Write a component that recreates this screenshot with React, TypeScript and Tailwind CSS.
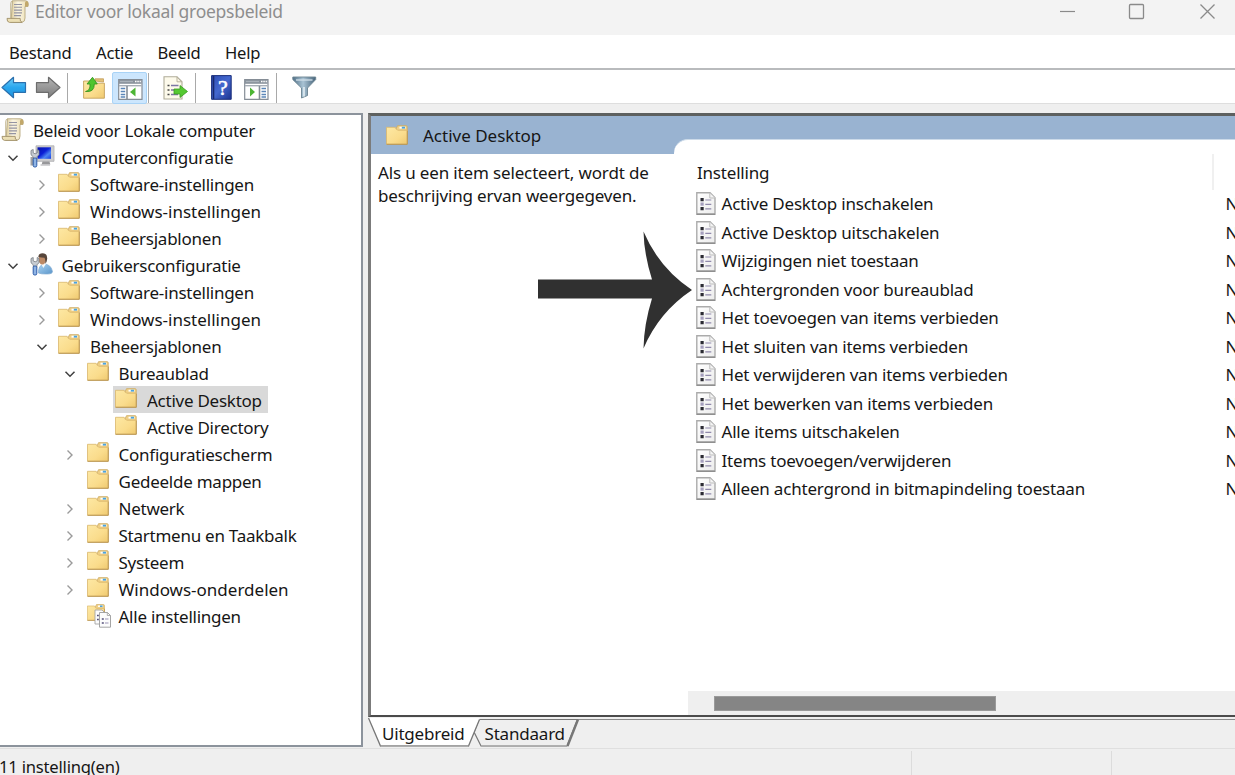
import type { ReactNode } from 'react'

interface TreeItem {
  label: string
  depth: number
  icon: 'scroll' | 'computer' | 'user' | 'folder' | 'all'
  state?: 'open' | 'closed'
  selected?: boolean
}

const treeItems: TreeItem[] = [
  { label: 'Beleid voor Lokale computer', depth: 0, icon: 'scroll' },
  { label: 'Computerconfiguratie', depth: 1, icon: 'computer', state: 'open' },
  { label: 'Software-instellingen', depth: 2, icon: 'folder', state: 'closed' },
  { label: 'Windows-instellingen', depth: 2, icon: 'folder', state: 'closed' },
  { label: 'Beheersjablonen', depth: 2, icon: 'folder', state: 'closed' },
  { label: 'Gebruikersconfiguratie', depth: 1, icon: 'user', state: 'open' },
  { label: 'Software-instellingen', depth: 2, icon: 'folder', state: 'closed' },
  { label: 'Windows-instellingen', depth: 2, icon: 'folder', state: 'closed' },
  { label: 'Beheersjablonen', depth: 2, icon: 'folder', state: 'open' },
  { label: 'Bureaublad', depth: 3, icon: 'folder', state: 'open' },
  { label: 'Active Desktop', depth: 4, icon: 'folder', selected: true },
  { label: 'Active Directory', depth: 4, icon: 'folder' },
  { label: 'Configuratiescherm', depth: 3, icon: 'folder', state: 'closed' },
  { label: 'Gedeelde mappen', depth: 3, icon: 'folder' },
  { label: 'Netwerk', depth: 3, icon: 'folder', state: 'closed' },
  { label: 'Startmenu en Taakbalk', depth: 3, icon: 'folder', state: 'closed' },
  { label: 'Systeem', depth: 3, icon: 'folder', state: 'closed' },
  { label: 'Windows-onderdelen', depth: 3, icon: 'folder', state: 'closed' },
  { label: 'Alle instellingen', depth: 3, icon: 'all' },
]

const settings = [
  'Active Desktop inschakelen',
  'Active Desktop uitschakelen',
  'Wijzigingen niet toestaan',
  'Achtergronden voor bureaublad',
  'Het toevoegen van items verbieden',
  'Het sluiten van items verbieden',
  'Het verwijderen van items verbieden',
  'Het bewerken van items verbieden',
  'Alle items uitschakelen',
  'Items toevoegen/verwijderen',
  'Alleen achtergrond in bitmapindeling toestaan',
]

const indents = ['pl-px', 'pl-0', 'pl-[28.5px]', 'pl-[57px]', 'pl-[85.5px]']

function Gradients() {
  return (
    <svg width="0" height="0" className="absolute">
      <defs>
        <linearGradient id="folder" x1="0" y1="0" x2="1" y2="1">
          <stop offset="0" stopColor="#fde8a4" />
          <stop offset="0.6" stopColor="#fadc8c" />
          <stop offset="1" stopColor="#efc96f" />
        </linearGradient>
        <linearGradient id="paper" x1="0" y1="0" x2="1" y2="1">
          <stop offset="0" stopColor="#ffffff" />
          <stop offset="1" stopColor="#ececec" />
        </linearGradient>
        <linearGradient id="parchment" x1="0" y1="0" x2="1" y2="0">
          <stop offset="0" stopColor="#dccb9a" />
          <stop offset="0.4" stopColor="#fbf6e4" />
          <stop offset="1" stopColor="#eadcb0" />
        </linearGradient>
        <linearGradient id="blueArrow" x1="0" y1="0" x2="0" y2="1">
          <stop offset="0" stopColor="#6fcdf8" />
          <stop offset="0.5" stopColor="#2aa7ee" />
          <stop offset="1" stopColor="#1f92dc" />
        </linearGradient>
        <linearGradient id="grayArrow" x1="0" y1="0" x2="0" y2="1">
          <stop offset="0" stopColor="#b5b5b5" />
          <stop offset="1" stopColor="#7c7c7c" />
        </linearGradient>
        <linearGradient id="screen" x1="0" y1="0" x2="1" y2="1">
          <stop offset="0" stopColor="#0a14a8" />
          <stop offset="0.45" stopColor="#0b1fd6" />
          <stop offset="0.7" stopColor="#4d86f2" />
          <stop offset="1" stopColor="#1a3fe0" />
        </linearGradient>
        <linearGradient id="shirt" x1="0" y1="0" x2="1" y2="1">
          <stop offset="0" stopColor="#a9d3f3" />
          <stop offset="1" stopColor="#5b95c9" />
        </linearGradient>
        <linearGradient id="book" x1="0" y1="0" x2="1" y2="1">
          <stop offset="0" stopColor="#2f4fb4" />
          <stop offset="0.5" stopColor="#4468cf" />
          <stop offset="1" stopColor="#1c3390" />
        </linearGradient>
        <linearGradient id="funnel" x1="0" y1="0" x2="1" y2="0">
          <stop offset="0" stopColor="#4f6f86" />
          <stop offset="0.45" stopColor="#a9c3d4" />
          <stop offset="1" stopColor="#47647a" />
        </linearGradient>
      </defs>
    </svg>
  )
}

function FolderShape() {
  return (
    <g>
      <path d="M10 4 11.500.7H20q1.200 0 1.200 1V6H10z" fill="#f0d086" stroke="#cfae66" strokeWidth="0.9" />
      <path d="M13.500 1.700h6v1.900h-6z" fill="#fff" />
      <path d="M15.800 1.700h3.200v1.900h-3.200z" fill="#4ba3de" />
      <path d="M.5 2.300h8.700q.8 2.900 3 2.900h9V19.200H.5z" fill="url(#folder)" stroke="#d9b66c" strokeWidth="0.8" />
      <path d="M.6 19.300h20.700V5.800" fill="none" stroke="#b5924f" strokeWidth="0.9" />
    </g>
  )
}

function FolderIcon() {
  return (
    <svg width="25" height="24" viewBox="0 0 25 24">
      <FolderShape />
    </svg>
  )
}

function ScrollIcon() {
  return (
    <svg width="25" height="24" viewBox="0 0 25 24">
      <path d="M6.500.8h13.200q2.800.3 2.600 3.400l-.3 2.300h-3V18q0 4-3 4.200H5z" fill="url(#parchment)" stroke="#b8a980" strokeWidth="0.9" />
      <path d="M7 .8Q4.500 1 4.700 4v14" fill="none" stroke="#bfb18a" strokeWidth="0.9" />
      <path d="M19 6.500V3q.4-2 1.600-2 1.800.3 1.700 3.200l-.3 2.300z" fill="#c2a86a" />
      <path d="M1 18.400h13.200q-.6 3.200 2 4H3.600q-2.800-.3-2.600-4z" fill="#ecdfb4" stroke="#a09069" strokeWidth="0.9" />
      <path d="M8 4.500h8M8 7.300h8M8 10.100h8M8 12.900h8M8 15.600h7" stroke="#9494a2" strokeWidth="1.100" />
    </svg>
  )
}

function Wrench() {
  return (
    <g>
      <path d="M1 5.500v4.200l2.300 2.200v2.600h3.600v-2.600L9 9.700V5.500L7.200 4.500v3.400l-2 .9-2-.9V4.500z" fill="#c7ccd2" stroke="#73797f" strokeWidth="0.8" />
      <rect x="3.200" y="13" width="3.600" height="9" rx="1.500" fill="#8fb4e4" stroke="#2c5ba8" strokeWidth="1" />
    </g>
  )
}

function ComputerIcon() {
  return (
    <svg width="25" height="24" viewBox="0 0 25 24">
      <path d="M.5 12H6V20.500H.5z" fill="#a2a2a2" />
      <path d="M6 .8h18v15.500H6z" fill="#cdcdcf" stroke="#adadb0" strokeWidth="0.8" />
      <path d="M7.500 2.300h13.500v11.500H7.500z" fill="url(#screen)" />
      <path d="M12.500 16.500h7l.8 3h-8.600z" fill="#97979a" />
      <path d="M10.500 19.300h9.500v1.400h-9.500z" fill="#c2c2c4" />
      <Wrench />
    </svg>
  )
}

function UserIcon() {
  return (
    <svg width="25" height="24" viewBox="0 0 25 24">
      <path d="M8.500 20q-.2-7.500 5-9 7.500 0 9 7.500-.1 2.500-5.200 2.500-6.500.2-8.800-1z" fill="url(#shirt)" stroke="#7fabd1" strokeWidth="0.7" />
      <path d="M11 10.500l2.300 4.500 2.700-4z" fill="#f6fafc" />
      <ellipse cx="12.300" cy="6.200" rx="3.700" ry="5.200" fill="#bd8a66" />
      <path d="M8.300 4Q8.500.3 12.500.3q5 .2 4.700 5.400-.3 3.800-2 5 .5-3.700-.7-6Q11.500 4.500 8.300 4z" fill="#57463b" />
      <Wrench />
    </svg>
  )
}

function SheetShape() {
  return (
    <g>
      <path d="M.8.800H14l5 5V22.200H.8z" fill="url(#paper)" stroke="#ababab" strokeWidth="1.400" />
      <path d="M13.800 1v5H19" fill="#f4f4f4" stroke="#bcbcbc" strokeWidth="1" />
      <path d="M.8 22.200H19" stroke="#8c8c8c" strokeWidth="1.400" />
      <path d="M4.500 6h3.200v3.200H4.500zM4.500 15h3.200v3.200H4.500z" fill="#2b2b33" />
      <path d="M4.500 10.500h3.200v3.200H4.500z" fill="#a59fbd" />
      <path d="M9.300 8h6M9.300 12.300h6M9.300 16.800h6" stroke="#9089ab" strokeWidth="1.200" />
    </g>
  )
}

function AllSettingsIcon() {
  return (
    <svg width="25" height="24" viewBox="0 0 25 24">
      <g transform="scale(.82 .85)">
        <FolderShape />
      </g>
      <path d="M8 6h7l3 3v11H8z" fill="#fcfcfc" stroke="#a5a5a5" strokeWidth="0.9" />
      <path d="M10 11.500h1.800M10 15.500h1.800" stroke="#54507a" strokeWidth="1.500" />
      <path d="M12.500 8.500h8l3 3v11.700h-11z" fill="#fcfcfc" stroke="#9b9b9b" strokeWidth="0.900" />
      <path d="M20.300 8.500v3h3" fill="none" stroke="#9b9b9b" strokeWidth="0.800" />
      <path d="M14.800 15h2M14.800 19h2" stroke="#54507a" strokeWidth="1.600" />
      <path d="M18 15h3.500M18 19h3.500" stroke="#9a93b5" strokeWidth="1.200" />
    </svg>
  )
}

function TreeIcon({ name }: { name: TreeItem['icon'] }) {
  if (name === 'scroll') return <ScrollIcon />
  if (name === 'computer') return <ComputerIcon />
  if (name === 'user') return <UserIcon />
  if (name === 'all') return <AllSettingsIcon />
  return <FolderIcon />
}

function Chevron({ state }: { state?: 'open' | 'closed' }) {
  return (
    <span className="flex w-[29.5px] shrink-0 items-center pl-[7px] pt-[2px]">
      {state === 'open' && (
        <svg width="12" height="12" viewBox="0 0 12 12" fill="none">
          <path d="M1.500 3.700 6 8.200l4.500-4.500" stroke="#404040" strokeWidth="1.500" />
        </svg>
      )}
      {state === 'closed' && (
        <svg width="12" height="12" viewBox="0 0 12 12" fill="none">
          <path d="M3.500 1.500 8 6l-4.500 4.500" stroke="#9a9a9a" strokeWidth="1.400" />
        </svg>
      )}
    </span>
  )
}

function ConsoleIcon({ flipped }: { flipped?: boolean }) {
  return (
    <svg width="25" height="21" viewBox="0 0 25 21">
      <path d="M.7.700h23.300v19.600H.7z" fill="#fff" stroke="#858d96" strokeWidth="1.200" />
      <path d="M1 1h22.700v3.800H1z" fill="#8a939d" />
      <path d="M2 2.500h13" stroke="#aab2ba" strokeWidth="1.200" />
      <path d="M17 2.500h1.500M19.300 2.500h1.500M21.600 2.500h1.300" stroke="#fff" strokeWidth="1.400" />
      <path d="M1 6.700h22.700" stroke="#a7aeb6" strokeWidth="1.400" />
      {flipped ? (
        <g>
          <path d="M15.500 7v13" stroke="#858d96" strokeWidth="1.600" />
          <path d="M17.500 9.500h4.500M17.500 12.500h4.500M17.500 15.500h4.500M17.500 18h4.500" stroke="#5b86b8" strokeWidth="1.300" />
          <path d="M6 8.500v9l5-4.500z" fill="#4db535" />
        </g>
      ) : (
        <g>
          <path d="M9 7v13" stroke="#858d96" strokeWidth="1.600" />
          <path d="M2.700 9.500h4.500M2.700 12.500h4.500M2.700 15.500h4.500M2.700 18h4.500" stroke="#5b86b8" strokeWidth="1.300" />
          <path d="M17.500 8.500v9l-5.500-4.500z" fill="#4db535" />
        </g>
      )}
    </svg>
  )
}

function Separator({ className }: { className: string }) {
  return <span className={`h-[30px] w-px shrink-0 bg-[#a9a9a9] ${className}`} />
}

function Toolbar() {
  return (
    <div className="flex h-[34px] shrink-0 items-center border-b border-[#dedede] bg-white pl-px pt-[2px]">
      <svg width="26" height="23" viewBox="0 0 26 23" className="shrink-0">
        <path d="M1 11.500 12.500 1.300v5.400H24.500v9.600h-12v5.400z" fill="url(#blueArrow)" stroke="#2a70ae" strokeWidth="1.200" strokeLinejoin="round" />
      </svg>
      <svg width="26" height="23" viewBox="0 0 26 23" className="ml-2 shrink-0">
        <path d="M25 11.500 13.500 1.300v5.400H1.500v9.600h12v5.400z" fill="url(#grayArrow)" stroke="#6d6d6d" strokeWidth="1.200" strokeLinejoin="round" />
      </svg>
      <Separator className="ml-[6px]" />
      <svg width="22" height="23" viewBox="0 0 22 23" className="ml-[15px] shrink-0">
        <path d="M12 5V2.800h8.500V6z" fill="#e3c078" stroke="#c29d59" strokeWidth="0.800" />
        <path d="M.6 5h9l2 2.200h9.800v15H.6z" fill="url(#folder)" stroke="#c4a05b" strokeWidth="0.900" />
        <path d="M2.500 15.500q5-1 4.500-7.500H4L9.500 1.300 14.300 8H11.300q.2 8.500-8.800 7.500z" fill="#4fc52e" stroke="#2f8f1c" strokeWidth="0.800" />
      </svg>
      <span className="ml-[7px] flex h-[32px] w-[35px] shrink-0 items-center justify-center rounded-[2px] border border-[#a9d3f6] bg-[#cce6fd] pl-px pt-[4px]">
        <ConsoleIcon />
      </span>
      <Separator className="ml-px" />
      <svg width="26" height="24" viewBox="0 0 26 24" className="ml-[14px] shrink-0">
        <path d="M1 .8h13l5 5V23H1z" fill="#fdfaeb" stroke="#b0ac99" strokeWidth="1.100" />
        <path d="M14 .8v5h5" fill="none" stroke="#b8b29a" strokeWidth="1" />
        <path d="M4.500 9.500h2M4.500 14h2M4.500 18.500h2" stroke="#444" strokeWidth="1.500" />
        <path d="M8 9.500h7.500M8 14h6M8 18.500h7" stroke="#7c76a3" strokeWidth="1.300" />
        <path d="M11 13h6V9.500l7.500 6-7.500 6V18h-6z" fill="#55c932" stroke="#3a9b21" strokeWidth="0.800" />
      </svg>
      <Separator className="ml-[6px]" />
      <svg width="21" height="25" viewBox="0 0 21 25" className="ml-[15px] shrink-0">
        <path d="M.6.600h19.600v23.700H.6z" fill="url(#book)" stroke="#1b2f7c" strokeWidth="1" />
        <path d="M2.500 1v23" stroke="#18296f" strokeWidth="1.600" />
        <text x="11.800" y="19.500" textAnchor="middle" fontSize="22" fill="#fff" stroke="#fff" strokeWidth="0.500" fontFamily="Liberation Serif, serif">?</text>
      </svg>
      <span className="ml-[12px] flex shrink-0 items-center pt-[3px]">
        <ConsoleIcon flipped />
      </span>
      <Separator className="ml-[7px]" />
      <svg width="25" height="23" viewBox="0 0 25 23" className="ml-[15px] shrink-0">
        <path d="M.8 1h22.900v2.600L15.500 12v7.500L9.500 22V12L.8 3.600z" fill="url(#funnel)" stroke="#6b8391" strokeWidth="0.900" />
        <path d="M4 4h16.500" stroke="#d2e0e9" strokeWidth="1.300" />
        <path d="M12 11v9.500" stroke="#e3edf3" strokeWidth="1.600" />
      </svg>
    </div>
  )
}

function TitleBar() {
  return (
    <div className="flex h-[35px] shrink-0 bg-[#f3f3f3] text-[#8e8e8e]">
      <div className="flex h-[24px] flex-1 items-center">
        <span className="ml-[6px] w-[29px]">
          <ScrollIcon />
        </span>
        <span className="-mt-[2px] text-[17.5px] tracking-[-0.27px]">Editor voor lokaal groepsbeleid</span>
      </div>
      <div className="flex h-[23px] items-center pr-[19px]">
        <svg width="17" height="17" viewBox="0 0 17 17" fill="none" stroke="#8a8a8a" strokeWidth="1.200">
          <path d="M1 8.500h15" />
        </svg>
        <svg width="17" height="17" viewBox="0 0 17 17" fill="none" stroke="#8a8a8a" strokeWidth="1.300" className="ml-[52px] mr-[54px]">
          <rect x="1.500" y="1.500" width="14" height="14" rx="1" />
        </svg>
        <svg width="17" height="17" viewBox="0 0 17 17" fill="none" stroke="#8a8a8a" strokeWidth="1.300">
          <path d="m1.500 1.500 14 14M15.500 1.500l-14 14" />
        </svg>
      </div>
    </div>
  )
}

function MenuBar() {
  return (
    <div className="flex h-[35px] shrink-0 items-center border-b-2 border-[#b9bbbd] bg-white pl-[9px] pt-px text-[16.6px]">
      <span className="w-[87px]">Bestand</span>
      <span className="w-[61.5px]">Actie</span>
      <span className="w-[67.5px]">Beeld</span>
      <span>Help</span>
    </div>
  )
}

function Tree() {
  return (
    <div className="w-[363px] shrink-0 border-y-2 border-r-2 border-[#8c939c] bg-white pt-px">
      {treeItems.map((item, i) => (
        <div key={i} className={`flex h-[27px] items-center ${indents[item.depth]}`}>
          {item.depth > 0 && <Chevron state={item.state} />}
          <span
            className={`-ml-[2px] flex h-[27px] items-center pl-[2px] pr-[6px] ${
              item.selected ? 'bg-[#d9d9d9]' : ''
            }`}
          >
            <span className="w-[32px] shrink-0 pt-px">
              <TreeIcon name={item.icon} />
            </span>
            <span
              className={`whitespace-nowrap pt-[2px] ${
                item.label.startsWith('Windows') ? 'tracking-normal' : 'tracking-[-0.25px]'
              }`}
            >
              {item.label}
            </span>
          </span>
        </div>
      ))}
    </div>
  )
}

function Tabs() {
  return (
    <div className="relative flex h-[30px] shrink-0">
      <svg width="867" height="30" viewBox="0 0 867 30" fill="none" className="absolute left-0 top-0">
        <path d="M111 2.500H867" stroke="#8b8b8b" strokeWidth="1.200" />
        <path d="M106 15l7 14h86l10.500-26.500H111z" fill="#efefef" stroke="#777" strokeWidth="1.200" />
        <path d="M199.500 29 210 2.500" stroke="#777" strokeWidth="2.400" />
        <path d="M.5 1 12.500 29h88l11-26.500V1z" fill="#fff" />
        <path d="M.5 1 12.500 29h88l11-26.500" stroke="#777" strokeWidth="1.300" />
        <path d="M12.500 29.300h88M113 29.300h86" stroke="#adadad" strokeWidth="1.600" />
      </svg>
      <span className="relative ml-[14px] w-[102.500px] pt-[5px]">Uitgebreid</span>
      <span className="relative pt-[5px]">Standaard</span>
    </div>
  )
}

function ListCell({ children }: { children: ReactNode }) {
  return <span className="flex-1 whitespace-nowrap">{children}</span>
}

function ResultPane() {
  return (
    <div className="flex min-h-0 flex-1 flex-col border-l-[3px] border-t-[3px] border-b-2 border-b-[#4b4b4b] border-l-[#7b7b7b] border-t-[#5d605f] bg-white">
      {/* Blue caption with the white list tab cut into it */}
      <div className="flex h-[37.500px] shrink-0 items-end bg-[#99b3d1]">
        <div className="flex h-full w-[302.500px] items-center pl-[15px]">
          <span className="w-[37px] pt-[4px]">
            <FolderIcon />
          </span>
          <span className="pt-px tracking-normal">Active Desktop</span>
        </div>
        <div className="h-[15px] flex-1 rounded-tl-[14px] border-t border-[#cddbe9] bg-white" />
      </div>
      <div className="flex min-h-0 flex-1">
        <div className="w-[317px] shrink-0 pl-[7px] pt-[7.500px] leading-[23px] tracking-[-0.150px]">
          Als u een item selecteert, wordt de
          <br />
          beschrijving ervan weergegeven.
        </div>
        <div className="flex flex-1 flex-col">
          <div className="flex h-[36px] shrink-0">
            <span className="w-[526px] border-r-2 border-[#f0f0f0] pl-[9px] pt-[7px]">Instelling</span>
          </div>
          <div className="flex-1">
            {settings.map((name) => (
              <div key={name} className="flex h-[28.500px] items-center pl-[8px]">
                <svg width="20" height="23" viewBox="0 0 20 23" className="mr-[5.500px] shrink-0">
                  <SheetShape />
                </svg>
                <ListCell>{name}</ListCell>
                <span className="w-[9.500px] overflow-hidden">N</span>
              </div>
            ))}
          </div>
          <div className="flex h-[24px] shrink-0 items-center bg-[#efefef] pl-[26px]">
            <div className="h-[15px] w-[282px] border border-[#9a9a9a] bg-[#858585]" />
          </div>
        </div>
      </div>
    </div>
  )
}

export default function App() {
  return (
    <div className="relative flex h-[775px] w-[1235px] flex-col overflow-hidden bg-[#efefef] font-['Noto_Sans',sans-serif] text-[17px] leading-[23px] tracking-[-0.200px] text-[#161616]">
      <Gradients />
      <TitleBar />
      <MenuBar />
      <Toolbar />
      <div className="mt-[9px] flex h-[634px] shrink-0 gap-[5px]">
        <Tree />
        <div className="flex min-w-0 flex-1 flex-col">
          <ResultPane />
          <Tabs />
        </div>
      </div>
      <div className="mt-px flex h-[40px] shrink-0 border-t border-[#dfdfdf] pt-[2px]">
        <span className="-ml-px w-[913px] border-r border-[#dcdcdc] pt-[4px] text-[16.600px]">11 instelling(en)</span>
        <span className="w-[200px] border-r border-[#dcdcdc]" />
      </div>

      {/* Arrow annotation pointing at the wallpaper setting */}
      <svg width="156" height="120" viewBox="0 0 156 120" className="absolute left-[537px] top-[230px]">
        <path d="M1 49.500H115Q107 24 106.500 1.500 122 38 155 60 122 82 106.500 118.500 107 94 115 68.500H1z" fill="#303030" />
      </svg>
    </div>
  )
}
